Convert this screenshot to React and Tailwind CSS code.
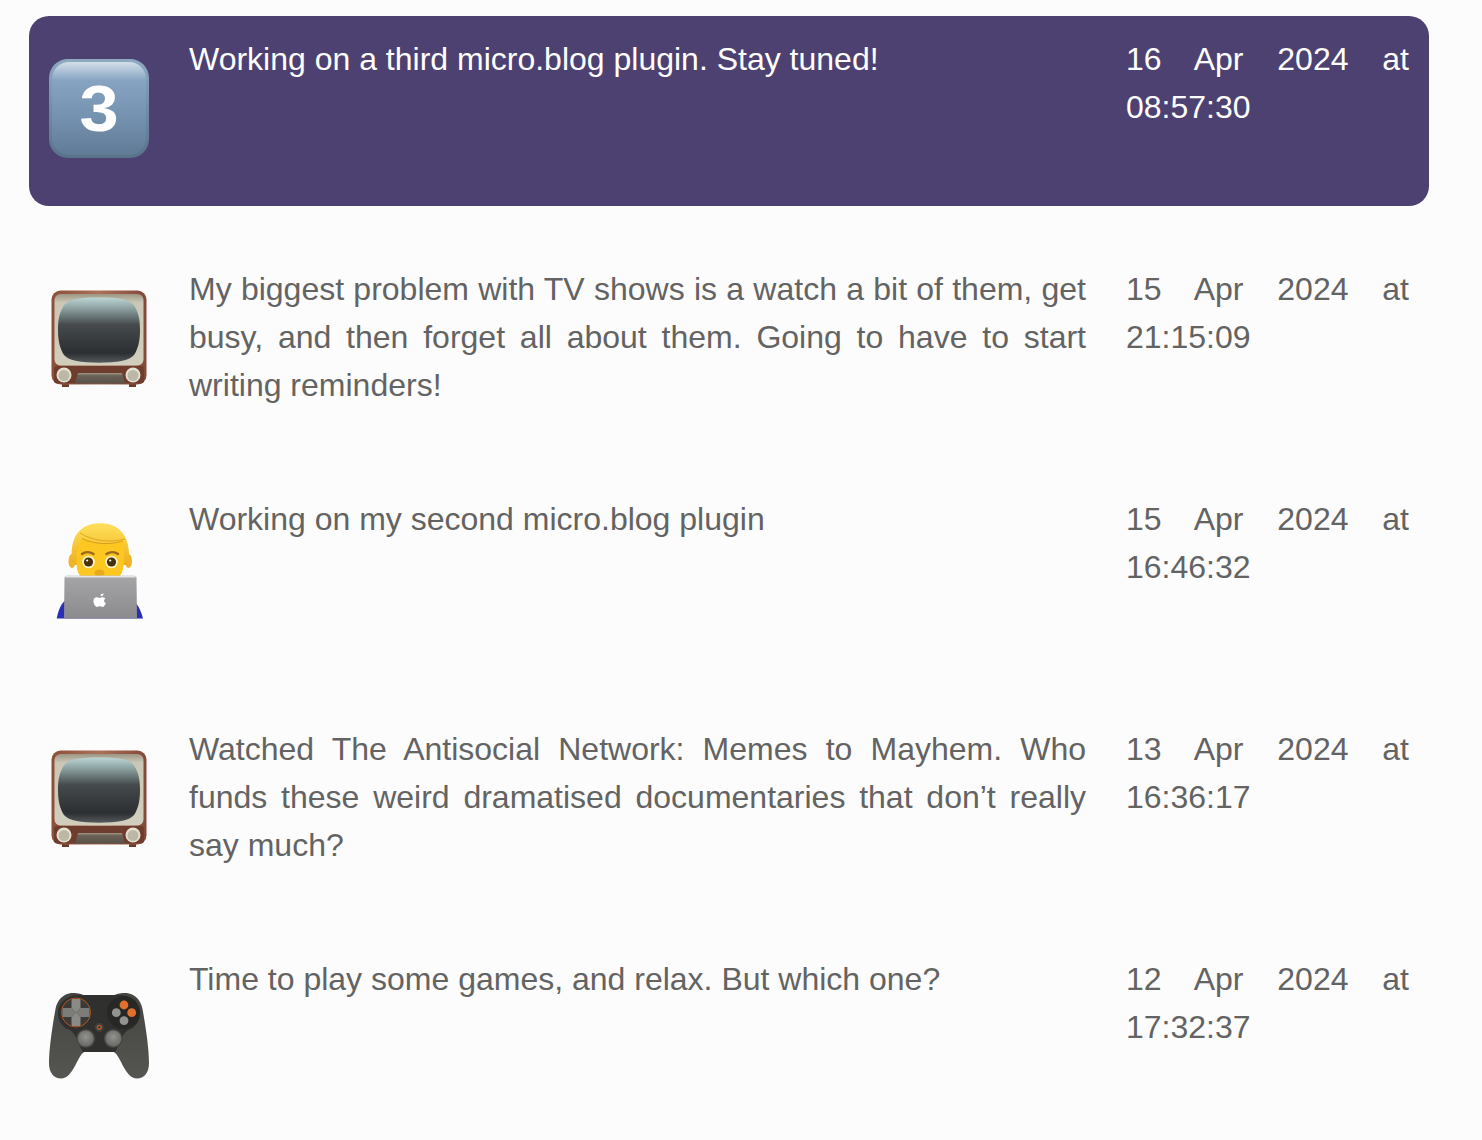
const posts = [
  { id: 1, icon: 'keycap', text: 'Working on a third micro.blog plugin. Stay tuned!', date: '16 Apr 2024 at 08:57:30', active: true },
  { id: 2, icon: 'tv', text: 'My biggest problem with TV shows is a watch a bit of them, get busy, and then forget all about them. Going to have to start writing reminders!', date: '15 Apr 2024 at 21:15:09' },
  { id: 3, icon: 'coder', text: 'Working on my second micro.blog plugin', date: '15 Apr 2024 at 16:46:32' },
  { id: 4, icon: 'tv', text: 'Watched The Antisocial Network: Memes to Mayhem. Who funds these weird dramatised documentaries that don’t really say much?', date: '13 Apr 2024 at 16:36:17' },
  { id: 5, icon: 'gamepad', text: 'Time to play some games, and relax. But which one?', date: '12 Apr 2024 at 17:32:37' },
];

function KeycapIcon() {
  return (
    <svg viewBox="0 0 100 100" className="w-[100px] h-[100px]">
      <defs>
        <linearGradient id="capRim" x1="0" y1="0" x2="0" y2="1">
          <stop offset="0" stopColor="#8fa9c0" />
          <stop offset="0.5" stopColor="#6f8eac" />
          <stop offset="1" stopColor="#587289" />
        </linearGradient>
        <linearGradient id="capFace" x1="0" y1="0" x2="0" y2="1">
          <stop offset="0" stopColor="#d3dfe9" />
          <stop offset="0.2" stopColor="#86a3c2" />
          <stop offset="0.6" stopColor="#7491af" />
          <stop offset="1" stopColor="#607b96" />
        </linearGradient>
      </defs>
      <rect x="0" y="0" width="100" height="99" rx="19" fill="url(#capRim)" />
      <rect x="3" y="3" width="94" height="93" rx="17" fill="url(#capFace)" />
      <text x="45.5" y="72" textAnchor="middle" fontSize="64" fontWeight="700" fill="#ffffff" fontFamily="'Liberation Sans', sans-serif" transform="scale(1.1 1)">3</text>
    </svg>
  );
}

function TvIcon({ uid }) {
  return (
    <svg viewBox="0 0 100 100" className="w-[100px] h-[100px]">
      <defs>
        <linearGradient id={`wood${uid}`} x1="0" y1="0" x2="1" y2="0">
          <stop offset="0" stopColor="#8d4f38" />
          <stop offset="0.5" stopColor="#ab7159" />
          <stop offset="1" stopColor="#84483a" />
        </linearGradient>
        <linearGradient id={`panel${uid}`} x1="0" y1="0" x2="0" y2="1">
          <stop offset="0" stopColor="#9d9685" />
          <stop offset="0.12" stopColor="#cbc6b5" />
          <stop offset="1" stopColor="#d2cebd" />
        </linearGradient>
        <linearGradient id={`glass${uid}`} x1="0" y1="0" x2="0" y2="1">
          <stop offset="0" stopColor="#bcd6d5" />
          <stop offset="0.14" stopColor="#94aaaa" />
          <stop offset="0.42" stopColor="#454a4c" />
          <stop offset="0.85" stopColor="#2c2f31" />
          <stop offset="1" stopColor="#55595b" />
        </linearGradient>
        <linearGradient id={`speaker${uid}`} x1="0" y1="0" x2="0" y2="1">
          <stop offset="0" stopColor="#a09786" />
          <stop offset="0.25" stopColor="#6a6256" />
          <stop offset="1" stopColor="#59524a" />
        </linearGradient>
      </defs>
      <rect x="13" y="94" width="7" height="4" fill="#6b3a2a" />
      <rect x="80" y="94" width="7" height="4" fill="#6b3a2a" />
      <rect x="2.5" y="1.5" width="95" height="94" rx="9" fill={`url(#wood${uid})`} />
      <rect x="5.5" y="5" width="89" height="71.5" rx="6" fill={`url(#panel${uid})`} />
      <path d="M50 8.5C70 8.5 82 10 86 18C90 25 91 32 91 41C91 52 89 60 85 66C80 72 68 73.7 50 73.7C32 73.7 20 72 15 66C11 60 9 52 9 41C9 32 10 25 14 18C18 10 30 8.5 50 8.5Z" fill={`url(#glass${uid})`} />
      <rect x="5" y="77" width="90" height="17.5" rx="3" fill="#6f3d2d" />
      <path d="M29 84H73L76 94.5H26Z" fill={`url(#speaker${uid})`} />
      <circle cx="15" cy="86" r="7.5" fill="#e4e0d1" />
      <circle cx="15" cy="86.5" r="5.5" fill="#bdb8a6" />
      <circle cx="84" cy="86" r="7.5" fill="#e4e0d1" />
      <circle cx="84" cy="86.5" r="5.5" fill="#bdb8a6" />
    </svg>
  );
}

function CoderIcon() {
  return (
    <svg viewBox="0 0 100 100" className="w-[100px] h-[100px]">
      <defs>
        <linearGradient id="hair" x1="0" y1="0" x2="0" y2="1">
          <stop offset="0" stopColor="#ffe05c" />
          <stop offset="1" stopColor="#eeb01c" />
        </linearGradient>
        <linearGradient id="lid" x1="0" y1="0" x2="0" y2="1">
          <stop offset="0" stopColor="#a5a5a7" />
          <stop offset="1" stopColor="#8b8b8d" />
        </linearGradient>
      </defs>
      <path d="M7.7 99.5C10 88 14 80 24 77H76C86 80 91 88 94 99.5Z" fill="#2b2fb5" />
      <ellipse cx="23" cy="42" rx="3.5" ry="7" fill="#f0b32a" />
      <ellipse cx="79.5" cy="42" rx="3.5" ry="7" fill="#f0b32a" />
      <path d="M22.7 40C21 14 34 4.2 51 4.2C68 4.2 81 14 80 40L78 46H25Z" fill="url(#hair)" />
      <path d="M27.5 42C28 32 30 25 33 19.5C45 25.5 62 26 73.5 22C75 27 75 33 75 42L74 50C72 60 62 66 51 66C40 66 30 60 28 50Z" fill="#fcc721" />
      <path d="M31 14C43 22 62 24 76 20" stroke="#e0a81c" strokeWidth="1" fill="none" />
      <path d="M33 19.5C45 25.5 62 26 73.5 22" stroke="#d99f18" strokeWidth="1" fill="none" />
      <path d="M33 35C36 32.5 41 32.5 44.5 35" stroke="#9c6a1a" strokeWidth="2.4" fill="none" strokeLinecap="round" />
      <path d="M57.5 35C61 32.5 66 32.5 69 35" stroke="#9c6a1a" strokeWidth="2.4" fill="none" strokeLinecap="round" />
      <circle cx="39.5" cy="43" r="6.3" fill="#fff4c8" />
      <circle cx="39.5" cy="43" r="4.6" fill="#47310f" />
      <circle cx="38.2" cy="41.5" r="1.1" fill="#ffffff" />
      <circle cx="62.5" cy="43" r="6.3" fill="#fff4c8" />
      <circle cx="62.5" cy="43" r="4.6" fill="#47310f" />
      <circle cx="61.2" cy="41.5" r="1.1" fill="#ffffff" />
      <ellipse cx="50.5" cy="54" rx="5" ry="3.5" fill="#e9a91e" />
      <path d="M15.5 59C15.5 57.5 16.5 56.7 18 56.7H85C86.5 56.7 87.5 57.5 87.5 59L88 99.5H15Z" fill="url(#lid)" />
      <path d="M16 58.5C16 57.3 17 56.7 18 56.7H85C86 56.7 87 57.3 87 58.5Z" fill="#e4e4e4" />
      <path d="M51.6 75.6C52.7 74.6 54 74.4 54.6 74.4C54.7 75.8 53.6 77.2 51.9 77.3C51.7 76.5 51.7 76 51.6 75.6ZM47.6 78.2C48.8 78.2 49.8 78.9 50.7 78.9C51.6 78.9 52.6 78.1 54 78.2C55 78.3 55.9 78.8 56.4 79.6C54.4 80.8 54.9 83.6 56.8 84.3C56.2 85.8 55 87.9 53.6 87.9C52.5 87.9 52 87.2 50.8 87.2C49.5 87.2 49 87.9 48 87.9C46.4 87.9 44.4 84.6 44.4 82C44.4 79.6 45.9 78.2 47.6 78.2Z" fill="#ffffff" />
    </svg>
  );
}

function GamepadIcon() {
  return (
    <svg viewBox="0 0 100 100" className="w-[100px] h-[100px]">
      <defs>
        <linearGradient id="padBody" x1="0" y1="0" x2="0" y2="1">
          <stop offset="0" stopColor="#444441" />
          <stop offset="0.5" stopColor="#4c4c49" />
          <stop offset="1" stopColor="#555552" />
        </linearGradient>
        <radialGradient id="stick" cx="0.5" cy="0.4" r="0.6">
          <stop offset="0" stopColor="#92938f" />
          <stop offset="1" stopColor="#686966" />
        </radialGradient>
      </defs>
      <path d="M20 14.5C25 13.5 33 14.5 36 17H64C67 14.5 75 13.5 80 14.5C87 16 92 22 93.5 30C96 44 100 68 100 84C100 94 95 99.5 88 99.5C82 99.5 78 94 74 87C71 81 69 76 65 73H35C31 76 29 81 26 87C22 94 18 99.5 12 99.5C5 99.5 0 94 0 84C0 68 4 44 6.5 30C8 22 13 16 20 14.5Z" fill="url(#padBody)" />
      <path d="M9 32C11 21 20 16 30 16H70C80 16 89 21 91 32C92 42 86 49 79 51C72 56 71 66 66 73H34C29 66 28 56 21 51C14 49 8 42 9 32Z" fill="#30312e" />
      <circle cx="27" cy="33.5" r="14.5" fill="#3a3b37" stroke="#b4551f" strokeWidth="1" />
      <path d="M22.5 21.5C22.5 20.5 23 20 24 20H30C31 20 31.5 20.5 31.5 21.5V29L27 33.5L31.5 38V45.5C31.5 46.5 31 47 30 47H24C23 47 22.5 46.5 22.5 45.5V38L27 33.5L22.5 29Z" fill="#8a8b87" />
      <path d="M15 29H22.5L27 33.5L22.5 38H15C14 38 13.5 37.5 13.5 36.5V30.5C13.5 29.5 14 29 15 29ZM39 29H31.5L27 33.5L31.5 38H39C40 38 40.5 37.5 40.5 36.5V30.5C40.5 29.5 40 29 39 29Z" fill="#7c7d79" />
      <circle cx="74.5" cy="33.5" r="16.5" fill="#272825" />
      <circle cx="75" cy="26" r="4.4" fill="#e0702a" />
      <circle cx="82.7" cy="33.7" r="4.4" fill="#e0702a" />
      <circle cx="67.3" cy="33.7" r="4.4" fill="#92938f" />
      <circle cx="75" cy="41.7" r="4.4" fill="#92938f" />
      <circle cx="50.3" cy="48.3" r="4.5" fill="#3f403d" />
      <circle cx="50.3" cy="48.3" r="2" fill="none" stroke="#c4591f" strokeWidth="1.2" />
      <circle cx="36.7" cy="59.5" r="9.5" fill="#464744" />
      <circle cx="36.7" cy="59.5" r="8" fill="url(#stick)" />
      <circle cx="64.3" cy="59.5" r="9.5" fill="#464744" />
      <circle cx="64.3" cy="59.5" r="8" fill="url(#stick)" />
    </svg>
  );
}

function PostIcon({ name, uid }) {
  if (name === 'keycap') return <KeycapIcon />;
  if (name === 'tv') return <TvIcon uid={uid} />;
  if (name === 'coder') return <CoderIcon />;
  return <GamepadIcon />;
}

export default function App() {
  return (
    <div className="min-h-screen bg-[#fcfcfc] pt-4 pb-[14px] pl-[29px] font-['Liberation_Sans',Arial,sans-serif] text-[32px] leading-[48px] text-[#636363]">
      <ul className="flex flex-col gap-10 w-[1400px]">
        {posts.map(post => (
          <li
            key={post.id}
            className={`flex gap-10 p-5 rounded-[20px] ${post.active ? 'bg-[#4d4172] text-white' : ''}`}
          >
            <div className="w-[100px] h-[150px] pt-[23px] shrink-0">
              <PostIcon name={post.icon} uid={post.id} />
            </div>
            <p className="flex-1 -mt-px text-justify">{post.text}</p>
            <p className="w-[283px] shrink-0 -mt-px text-justify">{post.date}</p>
          </li>
        ))}
      </ul>
    </div>
  );
}
